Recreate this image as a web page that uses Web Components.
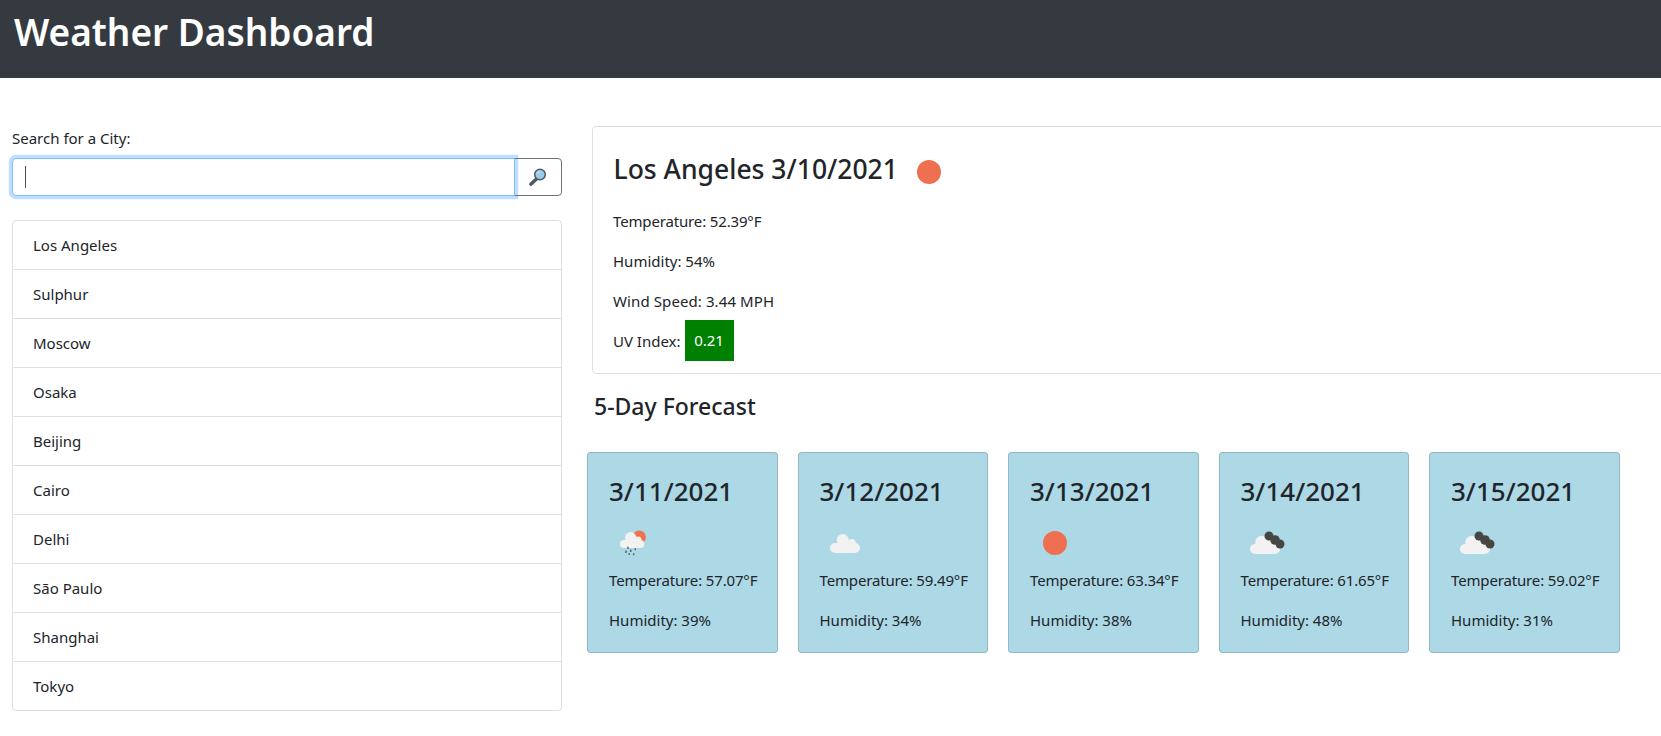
<!DOCTYPE html>
<html lang="en">
<head>
<meta charset="utf-8">
<title>Weather Dashboard</title>
<style>
  html, body { margin: 0; padding: 0; overflow: hidden; background: #fff; }
  body { font: 400 15px/24px "Noto Sans", "Open Sans", sans-serif; color: #212529; width: 1661px; height: 736px; }
</style>
</head>
<body>
<weather-app></weather-app>

<script>
class WeatherIcon extends HTMLElement {
  static shapes = {
    sun: '<circle cx="25" cy="25" r="12" fill="#ef7050"/>',
    rain: `<circle cx="30.300" cy="19" r="6.600" fill="#f0734f"/>
      <g fill="#f2f2f2"><rect x="11" y="22" width="24.300" height="8" rx="4"/><circle cx="21.700" cy="19.700" r="5.600"/><circle cx="29" cy="22" r="3.600"/></g>
      <g fill="#555f66"><rect x="18.200" y="28.800" width="1.600" height="2"/><rect x="16.200" y="32.700" width="1.600" height="2.200"/><rect x="20.900" y="31.700" width="1.600" height="2.200"/><rect x="19.500" y="35.200" width="1.500" height="1.700"/><rect x="25.500" y="30.400" width="1.500" height="1.800"/><rect x="23.900" y="35.400" width="1.500" height="1.800"/></g>`,
    cloud: `<g fill="#f2f2f2"><rect x="10" y="25" width="30" height="10" rx="5"/><circle cx="22.700" cy="22" r="6"/><circle cx="31.700" cy="25" r="4"/></g>`,
    broken: `<g fill="#f2f2f2"><rect x="9" y="26" width="30" height="10" rx="5"/><circle cx="21" cy="24.500" r="6.800"/><circle cx="31" cy="27" r="5.500"/></g>
      <g fill="#464646"><circle cx="28" cy="18" r="4.500"/><circle cx="34" cy="22" r="4.800"/><circle cx="39" cy="26" r="4.500"/></g>`
  };

  connectedCallback() {
    this.attachShadow({ mode: 'open' });
    const type = this.getAttribute('type') || 'sun';
    this.shadowRoot.innerHTML = `
      <style>
        :host { display: block; width: 50px; height: 50px; }
        svg { display: block; }
      </style>
      <svg width="50" height="50" viewBox="0 0 50 50">${WeatherIcon.shapes[type]}</svg>
    `;
  }
}

class CitySearch extends HTMLElement {
  connectedCallback() {
    this.attachShadow({ mode: 'open' });
    this.shadowRoot.innerHTML = `
      <style>
        :host { display: block; }
        label { display: block; height: 24px; margin-bottom: 8px; }
        .group { display: flex; position: relative; height: 38px; }
        input {
          flex: 1; min-width: 0; box-sizing: border-box; height: 38px; margin: 0; padding: 6px 12px;
          border: 1px solid #80bdff; border-radius: 4px 0 0 4px; outline: none;
          box-shadow: 0 0 0 3.2px rgba(0,123,255,.25); position: relative; z-index: 1;
          font: inherit; color: #495057; background: #fff;
        }
        button {
          width: 48px; margin: 0 0 0 -1px; padding: 0; background: #fff; border: 1px solid #6c757d;
          border-radius: 0 4px 4px 0; display: flex; align-items: center; justify-content: center;
        }
        .caret { position: absolute; left: 13px; top: 8px; width: 1px; height: 22px; background: #495057; z-index: 2; }
      </style>
      <label for="city">Search for a City:</label>
      <div class="group">
        <input id="city" type="text" aria-label="City">
        <span class="caret"></span>
        <button type="button" aria-label="Search">
          <svg width="22" height="22" viewBox="0 0 22 22">
            <path d="M9.500 13 3.800 18.200" stroke="#50575c" stroke-width="3.400" stroke-linecap="round"/>
            <circle cx="13" cy="8.500" r="5.300" fill="#9ccbee" stroke="#4c5a64" stroke-width="1.500"/>
            <path d="M10.500 7.500a3 3 0 0 1 2.500-2" stroke="#d4ebfa" stroke-width="1" fill="none"/>
          </svg>
        </button>
      </div>
    `;
  }
}

class CityList extends HTMLElement {
  connectedCallback() {
    this.attachShadow({ mode: 'open' });
    const rows = ['Los Angeles', 'Sulphur', 'Moscow', 'Osaka', 'Beijing', 'Cairo', 'Delhi', 'São Paulo', 'Shanghai', 'Tokyo'];
    this.shadowRoot.innerHTML = `
      <style>
        :host { display: block; margin-top: 24px; }
        ul { list-style: none; margin: 0; padding: 0; border: 1px solid rgba(0,0,0,.125); border-radius: 4px; }
        li { box-sizing: border-box; height: 49px; padding: 12px 20px; line-height: 24px; border-top: 1px solid rgba(0,0,0,.125); }
        li:first-child { border-top: 0; height: 48px; }
      </style>
      <ul>${rows.map(r => `<li>${r}</li>`).join('')}</ul>
    `;
  }
}

class CurrentWeather extends HTMLElement {
  connectedCallback() {
    this.attachShadow({ mode: 'open' });
    this.shadowRoot.innerHTML = `
      <style>
        :host { display: block; width: 1200px; margin-left: 5px; }
        .card { box-sizing: border-box; height: 248px; padding: 20px; border: 1px solid rgba(0,0,0,.125); border-radius: 4px; }
        .head { display: flex; height: 50px; align-items: center; margin-bottom: 12px; }
        h3 { margin: 0 0 0 .5px; font-size: 26.500px; line-height: 34px; font-weight: 500; color: #212529; position: relative; top: -3px; }
        weather-icon { margin-left: 6px; }
        p { margin: 0 0 16px; height: 24px; }
        .temp { letter-spacing: -.15px; }
        .wind { letter-spacing: .1px; }
        .uv { margin: 0; display: flex; align-items: center; height: 41px; margin-top: -9px; }
        .uv b { font-weight: 400; margin-left: 4px; background: #008000; color: #fff; width: 49px; height: 41px; line-height: 41px; text-align: center; }
      </style>
      <div class="card">
        <div class="head"><h3>Los Angeles 3/10/2021</h3><weather-icon type="sun"></weather-icon></div>
        <p class="temp">Temperature: 52.39°F</p>
        <p>Humidity: 54%</p>
        <p class="wind">Wind Speed: 3.44 MPH</p>
        <p class="uv">UV Index:<b>0.21</b></p>
      </div>
    `;
  }
}

class ForecastCard extends HTMLElement {
  connectedCallback() {
    this.attachShadow({ mode: 'open' });
    this.shadowRoot.innerHTML = `
      <style>
        :host { display: block; box-sizing: border-box; width: 190.500px; height: 201px; padding: 20px 21px; background: #add8e6; border: 1px solid rgba(0,0,0,.15); border-radius: 4px; }
        h3 { margin: 0 0 9px; font-size: 26px; line-height: 36px; font-weight: 500; white-space: nowrap; }
        p { margin: 0 0 16px; height: 24px; white-space: nowrap; }
        .temp { letter-spacing: -.15px; }
      </style>
      <h3>${this.getAttribute('date')}</h3>
      <weather-icon type="${this.getAttribute('icon')}"></weather-icon>
      <p class="temp">Temperature: ${this.getAttribute('temp')}°F</p>
      <p>Humidity: ${this.getAttribute('hum')}%</p>
    `;
  }
}

class WeatherApp extends HTMLElement {
  connectedCallback() {
    this.attachShadow({ mode: 'open' });
    this.shadowRoot.innerHTML = `
      <style>
        :host { display: block; }
        header { height: 78px; background: #343a40; color: #fff; padding: 8px 14px 0; box-sizing: border-box; }
        h1 { margin: 0; font-size: 37px; line-height: 48px; font-weight: 600; }
        main { display: flex; gap: 26px; padding: 48px 0 0 12px; }
        aside { width: 550px; flex: none; }
        section { flex: none; width: 1060px; margin-left: -1px; }
        h4 { margin: 18px 0 0 7px; font-size: 23px; line-height: 29px; font-weight: 500; }
        .days { display: flex; gap: 20px; margin-top: 31px; }
      </style>
      <header><h1>Weather Dashboard</h1></header>
      <main>
        <aside>
          <city-search></city-search>
          <city-list></city-list>
        </aside>
        <section>
          <current-weather></current-weather>
          <h4>5-Day Forecast</h4>
          <div class="days">
            <forecast-card date="3/11/2021" icon="rain" temp="57.07" hum="39"></forecast-card>
            <forecast-card date="3/12/2021" icon="cloud" temp="59.49" hum="34"></forecast-card>
            <forecast-card date="3/13/2021" icon="sun" temp="63.34" hum="38"></forecast-card>
            <forecast-card date="3/14/2021" icon="broken" temp="61.65" hum="48"></forecast-card>
            <forecast-card date="3/15/2021" icon="broken" temp="59.02" hum="31"></forecast-card>
          </div>
        </section>
      </main>
    `;
  }
}

customElements.define('weather-icon', WeatherIcon);
customElements.define('city-search', CitySearch);
customElements.define('city-list', CityList);
customElements.define('current-weather', CurrentWeather);
customElements.define('forecast-card', ForecastCard);
customElements.define('weather-app', WeatherApp);
</script>
</body>
</html>
